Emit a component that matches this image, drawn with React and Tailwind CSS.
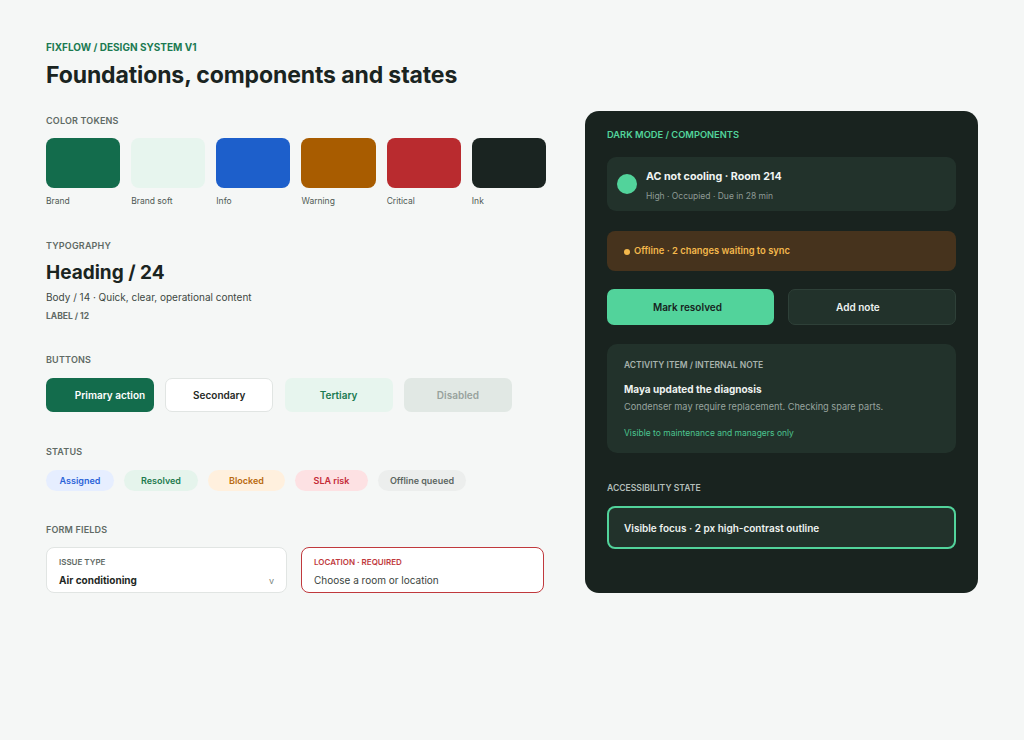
const swatches = [
    { name: "Brand", color: "bg-[#136c4c]" },
    { name: "Brand soft", color: "bg-[#e7f5ee]" },
    { name: "Info", color: "bg-[#1d5fcb]" },
    { name: "Warning", color: "bg-[#a85c00]" },
    { name: "Critical", color: "bg-[#b92b2f]" },
    { name: "Ink", color: "bg-[#1a2421]" },
]

const pills = [
    { label: "Assigned", cls: "bg-[#e6eeff] text-[#2a63d8] w-[68px]" },
    { label: "Resolved", cls: "bg-[#e5f4ec] text-[#1e7a4e] w-[74px]" },
    { label: "Blocked", cls: "bg-[#fff0de] text-[#b9690f] w-[77px]" },
    { label: "SLA risk", cls: "bg-[#fde1e3] text-[#c42a37] w-[73px]" },
    { label: "Offline queued", cls: "bg-[#eceeed] text-[#5c6662] w-[88px]" },
]

function SectionLabel({ children, className = "" }) {
    return (
        <div className={`text-[9px] leading-[14px] font-semibold tracking-[0.02em] text-[#5f6a65] ${className}`}>
            {children}
        </div>
    )
}

export default function App() {
    return (
        <div className="min-h-[740px] bg-[#f5f7f6] font-['Inter',sans-serif] text-[#1a2421]">
            <div className="flex pl-[46px] pt-[40px]">

                {/* left column */}
                <div className="w-[500px]">
                    <div className="text-[10px] leading-[14px] font-bold text-[#1b7a52]">FIXFLOW / DESIGN SYSTEM V1</div>
                    <h1 className="mt-[7px] text-[23px] leading-[28px] font-bold tracking-[-0.005em]">Foundations, components and states</h1>

                    <SectionLabel className="mt-[25px]">COLOR TOKENS</SectionLabel>
                    <div className="mt-[10px] grid grid-cols-6 gap-[11px]">
                        {swatches.map((s) => (
                            <div key={s.name}>
                                <div className={`h-[50px] rounded-[8px] ${s.color}`} />
                                <div className="mt-[6px] text-[8.5px] leading-[14px] text-[#4f5a55]">{s.name}</div>
                            </div>
                        ))}
                    </div>

                    <SectionLabel className="mt-[31px]">TYPOGRAPHY</SectionLabel>
                    <div className="mt-[8px] text-[19px] leading-[24px] font-bold">Heading / 24</div>
                    <div className="mt-[4px] text-[10px] leading-[16px] text-[#3d4843]">Body / 14 · Quick, clear, operational content</div>
                    <div className="mt-[5px] text-[8.5px] leading-[12px] font-bold text-[#5f6a65]">LABEL / 12</div>

                    <SectionLabel className="mt-[31px]">BUTTONS</SectionLabel>
                    <div className="mt-[11px] flex gap-[11.3px]">
                        <button className="w-[108px] h-[34px] rounded-[7px] bg-[#136c4c] text-white text-[10px] font-semibold pl-[20px]">Primary action</button>
                        <button className="w-[108px] h-[34px] rounded-[7px] bg-white border border-[#e1e5e3] text-[#1f2925] text-[10px] font-semibold">Secondary</button>
                        <button className="w-[108px] h-[34px] rounded-[7px] bg-[#e7f5ee] text-[#1b7a52] text-[10px] font-semibold">Tertiary</button>
                        <button className="w-[108px] h-[34px] rounded-[7px] bg-[#e1e8e4] text-[#98a29d] text-[10px] font-semibold">Disabled</button>
                    </div>

                    <SectionLabel className="mt-[33px]">STATUS</SectionLabel>
                    <div className="mt-[11px] flex gap-[10px]">
                        {pills.map((p) => (
                            <span key={p.label} className={`h-[21px] rounded-full flex items-center justify-center text-[9px] font-semibold ${p.cls}`}>
                                {p.label}
                            </span>
                        ))}
                    </div>

                    <SectionLabel className="mt-[32px]">FORM FIELDS</SectionLabel>
                    <div className="mt-[10px] flex gap-[14px]">
                        <div className="w-[241px] h-[46px] rounded-[8px] bg-white border border-[#e1e5e3] px-[12px] pt-[9px] flex">
                            <div className="flex-1">
                                <div className="text-[8px] leading-[11px] font-semibold text-[#5f6a65]">ISSUE TYPE</div>
                                <div className="mt-[5px] text-[10px] leading-[14px] font-bold text-[#1f2925]">Air conditioning</div>
                            </div>
                            <div className="pt-[17px] text-[9px] text-[#7b8580]">v</div>
                        </div>
                        <div className="w-[243px] h-[46px] rounded-[8px] bg-white border-[1.5px] border-[#c0393d] px-[12px] pt-[8.5px]">
                            <div className="text-[8px] leading-[11px] font-semibold text-[#c0393d]">LOCATION · REQUIRED</div>
                            <div className="mt-[5px] text-[10px] leading-[14px] text-[#3a4440]">Choose a room or location</div>
                        </div>
                    </div>
                </div>

                {/* dark panel */}
                <div className="ml-[39px] mt-[71px] w-[393px] h-[482px] rounded-[14px] bg-[#19231f] px-[22px] pt-[17px]">
                    <div className="text-[9.3px] leading-[14px] font-semibold text-[#52d39b]">DARK MODE / COMPONENTS</div>

                    <div className="mt-[15px] h-[54px] rounded-[9px] bg-[#22322b] flex items-center pl-[10px] gap-[9px]">
                        <div className="w-[20px] h-[20px] rounded-full bg-[#52d39b]" />
                        <div className="pt-[3px]">
                            <div className="text-[10.7px] leading-[14px] font-bold text-[#f1f5f3]">AC not cooling · Room 214</div>
                            <div className="mt-[6px] text-[8.5px] leading-[12px] text-[#8e9a95]">High · Occupied · Due in 28 min</div>
                        </div>
                    </div>

                    <div className="mt-[20px] h-[40px] rounded-[8px] bg-[#46331d] flex items-center pl-[17px] pt-[1px] gap-[4px]">
                        <span className="w-[6px] h-[6px] rounded-full bg-[#f4b84c]" />
                        <span className="text-[9.4px] font-semibold text-[#f4b84c]">Offline · 2 changes waiting to sync</span>
                    </div>

                    <div className="mt-[18px] flex gap-[14px]">
                        <button className="w-[168px] h-[36px] rounded-[7px] bg-[#52d39b] text-[#17231e] text-[10px] font-semibold pr-[6px] pt-[1px]">Mark resolved</button>
                        <button className="w-[169px] h-[36px] rounded-[7px] bg-[#22322b] border border-[#2e4038] text-[#eef3f0] text-[10px] font-semibold pr-[28px] pt-[1px]">Add note</button>
                    </div>

                    <div className="mt-[19px] h-[109px] rounded-[10px] bg-[#22322b] px-[17px] pt-[15px]">
                        <div className="text-[8.5px] leading-[12px] font-semibold text-[#a7b2ad]">ACTIVITY ITEM / INTERNAL NOTE</div>
                        <div className="mt-[11px] text-[10px] leading-[14px] font-bold text-[#eef3f0]">Maya updated the diagnosis</div>
                        <div className="mt-[4px] text-[9.2px] leading-[13px] text-[#98a49f]">Condenser may require replacement. Checking spare parts.</div>
                        <div className="mt-[14px] text-[8.5px] leading-[12px] text-[#4cc48f]">Visible to maintenance and managers only</div>
                    </div>

                    <div className="mt-[28px] text-[8.6px] leading-[14px] font-semibold text-[#b3beb9]">ACCESSIBILITY STATE</div>

                    <div className="mt-[11px] h-[43px] rounded-[8px] bg-[#22322b] border-2 border-[#52d39b] flex items-center pl-[15px] pt-[1px]">
                        <span className="text-[10px] font-semibold text-[#eef3f0]">Visible focus · 2 px high-contrast outline</span>
                    </div>
                </div>
            </div>
        </div>
    )
}
